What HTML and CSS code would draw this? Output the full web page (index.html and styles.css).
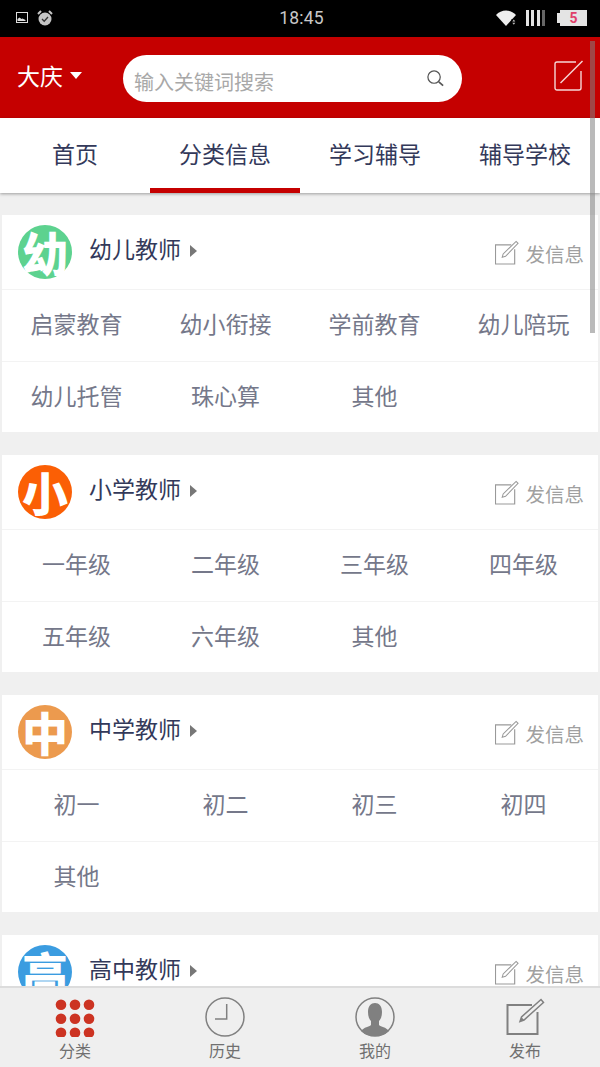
FILE: index.html
```html
<!DOCTYPE html>
<html lang="zh">
<head>
<meta charset="utf-8">
<title>分类信息</title>
<link rel="stylesheet" href="styles.css">
</head>
<body>
<div class="app">
  <div class="status">
    <div class="status-left">
      <svg class="st-pic" viewBox="0 0 12 11"><rect x=".5" y=".5" width="11" height="10" fill="#000" stroke="#ddd"/><path d="M1.500 9V7l2-1.500 2 1.500 1-.5 3 1.500V9z" fill="#ddd"/></svg>
      <svg class="st-alarm" viewBox="0 0 16 16"><circle cx="8" cy="9" r="6.500" fill="#c4c4c4"/><path d="M1 4l3-3M15 4l-3-3" stroke="#c4c4c4" stroke-width="2"/><path d="M5 9l2.200 2.200L11 7" fill="none" stroke="#333" stroke-width="1.300"/></svg>
    </div>
    <div class="time">18:45</div>
    <div class="status-right">
      <svg class="st-wifi" viewBox="0 0 20 16"><path d="M0 5C5-1 15-1 20 5L10 16z" fill="#eee"/><path d="M15.500 9h5v7h-5z" fill="#000"/><path d="M16.300 11.500h3l-1.500-2zM16.300 12.800h3l-1.500 2z" fill="#bbb"/></svg>
      <div class="st-signal"><i></i><i></i><i></i><i class="dim"></i></div>
      <div class="st-batt"><span class="st-nub"></span><span class="st-body">5</span></div>
    </div>
  </div>

  <header class="top">
    <div class="city">大庆<span class="caret"></span></div>
    <div class="search">
      <span class="ph">输入关键词搜索</span>
      <svg class="lens" viewBox="0 0 20 20"><circle cx="8.500" cy="8.500" r="6.500" fill="none" stroke="#555" stroke-width="1.300"/><path d="M13.500 13.500l4.500 4" stroke="#555" stroke-width="1.800"/></svg>
    </div>
    <svg class="compose" viewBox="0 0 30 32"><path d="M27 11V28a2 2 0 0 1-2 2H3a2 2 0 0 1-2-2V4a2 2 0 0 1 2-2h19" fill="none" stroke="#f6d6d6" stroke-width="1.400"/><path d="M6.500 23L28.500 1" stroke="#f6d6d6" stroke-width="1.400"/></svg>
  </header>

  <nav class="tabs">
    <div class="tab">首页</div>
    <div class="tab active">分类信息</div>
    <div class="tab">学习辅导</div>
    <div class="tab">辅导学校</div>
  </nav>

  <main class="list">
    <section class="card">
      <div class="card-head">
        <span class="badge green">幼</span>
        <span class="name">幼儿教师</span><span class="arrow"></span>
        <span class="post"><svg class="post-ic" viewBox="0 0 25 25"><path d="M17 4.500H.5v20h20V9" fill="none" stroke="#999" stroke-width="1.200"/><path d="M7.500 17.500l1-3.500L22 1l2 2L11 16.500z" fill="#fff" stroke="#999" stroke-width="1.100"/></svg>发信息</span>
      </div>
      <div class="row"><span>启蒙教育</span><span>幼小衔接</span><span>学前教育</span><span>幼儿陪玩</span></div>
      <div class="row"><span>幼儿托管</span><span>珠心算</span><span>其他</span></div>
    </section>

    <section class="card">
      <div class="card-head">
        <span class="badge orange">小</span>
        <span class="name">小学教师</span><span class="arrow"></span>
        <span class="post"><svg class="post-ic" viewBox="0 0 25 25"><path d="M17 4.500H.5v20h20V9" fill="none" stroke="#999" stroke-width="1.200"/><path d="M7.500 17.500l1-3.500L22 1l2 2L11 16.500z" fill="#fff" stroke="#999" stroke-width="1.100"/></svg>发信息</span>
      </div>
      <div class="row"><span>一年级</span><span>二年级</span><span>三年级</span><span>四年级</span></div>
      <div class="row"><span>五年级</span><span>六年级</span><span>其他</span></div>
    </section>

    <section class="card">
      <div class="card-head">
        <span class="badge amber">中</span>
        <span class="name">中学教师</span><span class="arrow"></span>
        <span class="post"><svg class="post-ic" viewBox="0 0 25 25"><path d="M17 4.500H.5v20h20V9" fill="none" stroke="#999" stroke-width="1.200"/><path d="M7.500 17.500l1-3.500L22 1l2 2L11 16.500z" fill="#fff" stroke="#999" stroke-width="1.100"/></svg>发信息</span>
      </div>
      <div class="row"><span>初一</span><span>初二</span><span>初三</span><span>初四</span></div>
      <div class="row"><span>其他</span></div>
    </section>

    <section class="card">
      <div class="card-head">
        <span class="badge blue">高</span>
        <span class="name">高中教师</span><span class="arrow"></span>
        <span class="post"><svg class="post-ic" viewBox="0 0 25 25"><path d="M17 4.500H.5v20h20V9" fill="none" stroke="#999" stroke-width="1.200"/><path d="M7.500 17.500l1-3.500L22 1l2 2L11 16.500z" fill="#fff" stroke="#999" stroke-width="1.100"/></svg>发信息</span>
      </div>
    </section>
  </main>

  <footer class="bottom">
    <div class="nav-item">
      <svg class="nav-ic" viewBox="0 0 40 40"><g fill="#cc3322"><circle cx="6" cy="7.700" r="5.300"/><circle cx="20" cy="7.700" r="5.300"/><circle cx="34" cy="7.700" r="5.300"/><circle cx="6" cy="21.700" r="5.300"/><circle cx="20" cy="21.700" r="5.300"/><circle cx="34" cy="21.700" r="5.300"/><circle cx="6" cy="35.700" r="5.300"/><circle cx="20" cy="35.700" r="5.300"/><circle cx="34" cy="35.700" r="5.300"/></g></svg>
      <span>分类</span>
    </div>
    <div class="nav-item">
      <svg class="nav-ic" viewBox="0 0 40 40"><circle cx="20" cy="20" r="19" fill="none" stroke="#808080" stroke-width="1.500"/><path d="M21.700 7v15H10" fill="none" stroke="#808080" stroke-width="1.500"/></svg>
      <span>历史</span>
    </div>
    <div class="nav-item">
      <svg class="nav-ic" viewBox="0 0 40 40"><circle cx="20" cy="20" r="19" fill="none" stroke="#808080" stroke-width="1.500"/><path d="M6 34c3-4 8-4 10-6v-4c-2-2-3-5-3-9 0-6 3-9 7-9s7 3 7 9c0 4-1 7-3 9v4c2 2 7 2 10 6-3 3-8 5-14 5S9 37 6 34z" fill="#808080"/></svg>
      <span>我的</span>
    </div>
    <div class="nav-item">
      <svg class="nav-ic" viewBox="0 0 40 40"><path d="M27 8H2.500v29h30V15" fill="none" stroke="#808080" stroke-width="2"/><path d="M15 24.500l1.500-4.500L36 2.500l2.500 3L19 23z" fill="#efefef" stroke="#808080" stroke-width="1.500"/><path d="M15 24.500l1.500-4.500 2.500 3z" fill="#808080"/></svg>
      <span>发布</span>
    </div>
  </footer>

  <div class="scrollbar"></div>
</div>
</body>
</html>
```
FILE: styles.css
```css
* { box-sizing: border-box; }
html, body { margin: 0; padding: 0; }
body {
  width: 600px;
  height: 1067px;
  overflow: hidden;
  font-family: "Noto Sans CJK SC", "Noto Sans", sans-serif;
}
.app {
  position: relative;
  width: 600px;
  height: 1067px;
  display: flex;
  flex-direction: column;
  background: #f0f0f0;
  overflow: hidden;
}

/* status bar */
.status {
  flex: 0 0 37px;
  background: #000;
  display: grid;
  grid-template-columns: 1fr auto 1fr;
  align-items: center;
  padding: 0 13px 0 16px;
}
.status-left { display: flex; align-items: center; gap: 9px; margin-bottom: 2px; }
.st-pic { width: 12px; height: 11px; }
.st-alarm { width: 16px; height: 16px; }
.time {
  font: 17.500px/37px Roboto, sans-serif;
  color: #c8c8c8;
  letter-spacing: .2px;
}
.status-right { display: flex; justify-content: flex-end; align-items: center; gap: 10px; margin-bottom: 1px; }
.st-wifi { width: 20px; height: 16px; }
.st-signal { display: flex; gap: 2.500px; }
.st-signal i { width: 3px; height: 16px; background: #e4e4e4; }
.st-signal i.dim { background: #666; }
.st-batt { display: flex; align-items: center; margin-left: 2px; }
.st-nub { width: 3px; height: 10px; background: #e4e4e4; }
.st-body {
  width: 27px;
  height: 16px;
  background: #e4e4e4;
  color: #e0406a;
  font: bold 14px/16px Roboto, sans-serif;
  text-align: center;
}

/* red header */
.top {
  flex: 0 0 81px;
  background: #c50000;
  display: flex;
  align-items: center;
  padding: 0 17px;
}
.city {
  width: 106px;
  color: #fff;
  font-size: 23px;
  line-height: 30px;
  display: flex;
  align-items: center;
  margin-bottom: 6px;
}
.caret {
  width: 0;
  height: 0;
  margin-left: 7px;
  margin-top: 2px;
  border-left: 6.500px solid transparent;
  border-right: 6.500px solid transparent;
  border-top: 7px solid #fff;
}
.search {
  width: 339px;
  height: 47px;
  margin-top: 1px;
  background: #fff;
  border-radius: 24px;
  display: flex;
  align-items: center;
  justify-content: space-between;
  padding: 0 17px 0 11px;
}
.ph { color: #a8a8a8; font-size: 20px; line-height: 28px; margin-top: 7px; }
.lens { width: 19px; height: 19px; margin-top: 1px; }
.compose { width: 30px; height: 32px; margin-left: auto; margin-right: -1px; margin-bottom: 3px; }

/* tabs */
.tabs {
  flex: 0 0 75px;
  height: 75px;
  background: #fff;
  display: grid;
  grid-template-columns: repeat(4, 150px);
  grid-template-rows: 75px;
  box-shadow: 0 1px 3px rgba(0, 0, 0, .35);
  position: relative;
}
.tab {
  height: 75px;
  color: #33395a;
  font-size: 23px;
  line-height: 71px;
  text-align: center;
}
.tab.active { border-bottom: 5px solid #c50000; }

/* list */
.list {
  flex: 1 1 0;
  min-height: 0;
  overflow: hidden;
  padding: 22px 2px 0;
  display: flex;
  flex-direction: column;
  gap: 23px;
}
.card { background: #fff; flex: none; }
.card-head {
  height: 74px;
  display: flex;
  align-items: center;
  padding: 0 14px 0 16px;
}
.badge {
  width: 54px;
  height: 54px;
  border-radius: 50%;
  flex: none;
  color: #fff;
  font-size: 46px;
  font-weight: 900;
  line-height: 53px;
  text-align: center;
}
.green { background: #5dd28f; }
.orange { background: #fb5f05; }
.amber { background: #ec9a4e; }
.blue { background: #3b9ce0; }
.name {
  margin-left: 18px;
  color: #33395a;
  font-size: 23px;
  line-height: 30px;
  margin-bottom: 9px;
  margin-left: 17px;
}
.arrow {
  width: 0;
  height: 0;
  margin-left: 9px;
  margin-bottom: 3px;
  border-top: 6.500px solid transparent;
  border-bottom: 6.500px solid transparent;
  border-left: 7px solid #777;
}
.post {
  margin-left: auto;
  display: flex;
  align-items: center;
  color: #a0a0a0;
  font-size: 19.500px;
  line-height: 26px;
  margin-top: 4px;
}
.post-ic { width: 24px; height: 25px; margin-right: 6px; margin-top: -3px; }
.row {
  height: 71.500px;
  border-top: 1px solid #f3f3f3;
  padding-bottom: 4px;
  display: grid;
  grid-template-columns: repeat(4, 149px);
  align-items: center;
}
.row span {
  color: #75788a;
  font-size: 23px;
  line-height: 30px;
  text-align: center;
}

/* bottom nav */
.bottom {
  flex: 0 0 81px;
  background: #efefef;
  border-top: 2px solid #dcdcdc;
  display: grid;
  grid-template-columns: repeat(4, 150px);
  position: relative;
}
.nav-item {
  display: flex;
  flex-direction: column;
  align-items: center;
  padding-top: 9px;
  color: #707070;
  font-size: 16px;
  line-height: 22px;
}
.nav-ic { width: 40px; height: 40px; margin-bottom: 2px; }

/* overlay scrollbar */
.scrollbar {
  position: absolute;
  top: 41px;
  right: 5px;
  width: 5px;
  height: 292px;
  background: rgba(130, 130, 130, .55);
}
```
